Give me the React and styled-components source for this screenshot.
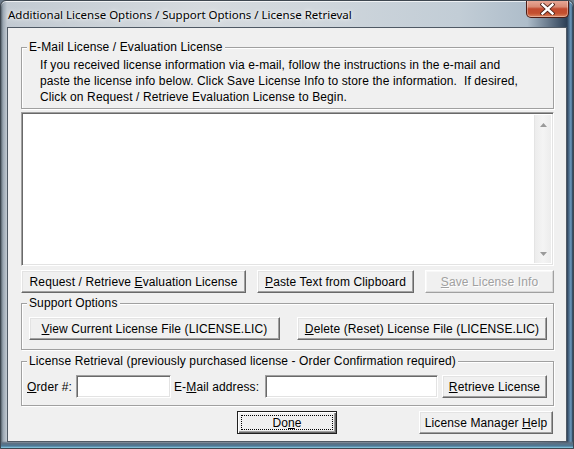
import React from 'react';
import styled, { createGlobalStyle } from 'styled-components';

const GlobalStyle = createGlobalStyle`
  html, body { margin: 0; padding: 0; }
  body { width: 574px; height: 449px; overflow: hidden; background: #6b7a89; }
  * { box-sizing: border-box; }
`;

const Window = styled.div`
  width: 574px;
  height: 449px;
  display: flex;
  flex-direction: column;
  border: 1px solid #3e4750;
  border-radius: 6px 6px 0 0;
  overflow: hidden;
  background:
    linear-gradient(to top, #8fd3ea 0, #4d7895 2px, #5f6f80 5px, rgba(95,111,128,0) 7px),
    linear-gradient(to right, #59656f 0, #9aa6b1 2px, #c2cad2 6px, #d5dade 35%, #cfd6dc 55%, #c2cdd6 80%, #aebdca 92%, #2c3f56 calc(100% - 6px), #6d9bc0 calc(100% - 2px), #26364a 100%);
  box-shadow: inset 0 1px 0 rgba(255,255,255,0.7);
`;

const TitleBar = styled.div`
  height: 26px;
  flex: none;
  display: flex;
  justify-content: space-between;
  padding: 0 4px 0 7px;
`;

const Title = styled.div`
  align-self: center;
  margin-top: 1px;
  font: 11.5px "Noto Sans", "Open Sans", sans-serif;
  color: #000;
  white-space: nowrap;
  text-shadow: 0 0 6px rgba(255,255,255,0.95), 0 0 3px rgba(255,255,255,0.9);
`;

const CloseButton = styled.div`
  align-self: flex-start;
  width: 43px;
  height: 18px;
  margin-top: -1px;
  border: 1px solid #4d1d15;
  border-top: none;
  border-radius: 0 0 5px 5px;
  background: linear-gradient(to bottom, #e9ab9b 0, #d98a74 40%, #c24a2f 52%, #c4502f 78%, #db8560 100%);
  box-shadow: inset 0 0 0 1px rgba(255,255,255,0.35);
  display: flex;
  align-items: center;
  justify-content: center;
`;

const Body = styled.div`
  flex: 1;
  display: flex;
  padding: 0 6px 6px 6px;
`;

const Client = styled.div`
  flex: 1;
  background: #f0f0f0;
  border: 1px solid #4f5964;
  padding: 0 12px 0 13px;
  display: flex;
  flex-direction: column;
  font: 12px "Liberation Sans", Arial, sans-serif;
  letter-spacing: 0.12px;
  color: #000;
`;

const Group = styled.div`
  flex: none;
  margin-top: ${p => p.$mt}px;
  height: ${p => p.$h}px;
  border: 1px solid #a0a0a0;
  box-shadow: inset 1px 1px 0 #fff, 1px 1px 0 #fff;
  display: flex;
  flex-direction: column;
`;

const Legend = styled.div`
  align-self: flex-start;
  margin: -9px 0 0 5px;
  padding: 0 2px;
  background: #f0f0f0;
  line-height: 16px;
  white-space: nowrap;
`;

const Para = styled.div`
  margin: 2px 0 0 18px;
  line-height: 16px;
`;

const EditArea = styled.div`
  flex: none;
  margin-top: 3px;
  height: 154px;
  display: flex;
  background: #fff;
  border: 1px solid;
  border-color: #a0a0a0 #fff #fff #a0a0a0;
  box-shadow: inset 1px 1px 0 #696969, inset -1px -1px 0 #e3e3e3;
  padding: 2px 2px 2px 2px;
`;

const EditText = styled.div`
  flex: 1;
`;

const ScrollBar = styled.div`
  width: 17px;
  background: linear-gradient(to right, #ececec, #f4f4f4 50%, #ececec);
  border-left: 1px solid #e4e4e4;
  display: flex;
  flex-direction: column;
  justify-content: space-between;
  align-items: center;
  padding: 8px 0 7px;
`;

const Row = styled.div`
  flex: none;
  display: flex;
  align-items: center;
  margin-top: ${p => p.$mt || 0}px;
  padding-left: ${p => p.$pl || 0}px;
  justify-content: ${p => p.$justify || 'flex-start'};
`;

const Button = styled.button`
  flex: none;
  width: ${p => p.$w}px;
  height: 23px;
  margin-left: ${p => p.$ml || 0}px;
  padding: 0;
  font: 12px "Liberation Sans", Arial, sans-serif;
  letter-spacing: 0.12px;
  color: #000;
  background: #f0f0f0;
  border: 1px solid;
  border-color: #fff #696969 #696969 #fff;
  box-shadow: inset -1px -1px 0 #a0a0a0, inset 1px 1px 0 #e3e3e3;
  white-space: nowrap;
  u { text-underline-offset: 1px; }

  &:disabled {
    color: #a0a0a0;
    text-shadow: 1px 1px 0 #fff;
    border-color: #fff #a0a0a0 #a0a0a0 #fff;
    box-shadow: inset -1px -1px 0 #d8d8d8, inset 1px 1px 0 #f8f8f8;
  }
`;

const DefaultButton = styled(Button)`
  border: 1px solid #202020;
  box-shadow: inset 1px 1px 0 #fff, inset -1px -1px 0 #696969, inset -2px -2px 0 #a0a0a0;
  outline: 1px dotted #000;
  outline-offset: -5px;
`;

const Label = styled.div`
  flex: none;
  width: ${p => p.$w}px;
  margin-left: ${p => p.$ml || 0}px;
  white-space: nowrap;
`;

const Input = styled.div`
  flex: none;
  width: ${p => p.$w}px;
  height: 23px;
  background: #fff;
  border: 1px solid;
  border-color: #a0a0a0 #fff #fff #a0a0a0;
  box-shadow: inset 1px 1px 0 #696969, inset -1px -1px 0 #e3e3e3;
`;

const Arrow = ({ up }) => (
  <svg width="7" height="4" viewBox="0 0 7 4">
    <path d={up ? 'M0 4 L3.5 0 L7 4 Z' : 'M0 0 L3.5 4 L7 0 Z'} fill="#9a9a9a" />
  </svg>
);

const CloseX = () => (
  <svg width="15" height="12" viewBox="0 0 15 12">
    <path d="M2.5 1.5 L12.5 10.5 M12.5 1.5 L2.5 10.5" stroke="#4a2018" strokeWidth="4.2" strokeLinecap="square" fill="none" />
    <path d="M2.5 1.5 L12.5 10.5 M12.5 1.5 L2.5 10.5" stroke="#ffffff" strokeWidth="2.4" strokeLinecap="square" fill="none" />
  </svg>
);

export default function App() {
  return (
    <>
      <GlobalStyle />
      <Window>
        <TitleBar>
          <Title>Additional License Options / Support Options / License Retrieval</Title>
          <CloseButton><CloseX /></CloseButton>
        </TitleBar>
        <Body>
          <Client>
            <Group $mt={19} $h={62}>
              <Legend>E-Mail License / Evaluation License</Legend>
              <Para>
                If you received license information via e-mail, follow the instructions in the e-mail and<br />
                paste the license info below. Click Save License Info to store the information.&nbsp; If desired,<br />
                Click on Request / Retrieve Evaluation License to Begin.
              </Para>
            </Group>

            <EditArea>
              <EditText />
              <ScrollBar>
                <Arrow up />
                <Arrow />
              </ScrollBar>
            </EditArea>

            <Row $mt={4} $justify="space-between">
              <Button $w={225}>Request / Retrieve <u>E</u>valuation License</Button>
              <Button $w={157}><u>P</u>aste Text from Clipboard</Button>
              <Button $w={129} disabled><u>S</u>ave License Info</Button>
            </Row>

            <Group $mt={10} $h={47}>
              <Legend>Support Options</Legend>
              <Row $mt={6} $pl={7}>
                <Button $w={251}><u>V</u>iew Current License File (LICENSE.LIC)</Button>
                <Button $w={250} $ml={17}><u>D</u>elete (Reset) License File (LICENSE.LIC)</Button>
              </Row>
            </Group>

            <Group $mt={11} $h={45}>
              <Legend>License Retrieval (previously purchased license - Order Confirmation required)</Legend>
              <Row $mt={6} $pl={5}>
                <Label $w={49}><u>O</u>rder #:</Label>
                <Input $w={95} />
                <Label $w={91} $ml={3}>E-<u>M</u>ail address:</Label>
                <Input $w={173} />
                <Button $w={105} $ml={4}><u>R</u>etrieve License</Button>
              </Row>
            </Group>

            <Row $mt={5}>
              <DefaultButton $w={100} $ml={216}>Do<u>n</u>e</DefaultButton>
              <Button $w={134} $ml={82}>License Manager <u>H</u>elp</Button>
            </Row>
          </Client>
        </Body>
      </Window>
    </>
  );
}
